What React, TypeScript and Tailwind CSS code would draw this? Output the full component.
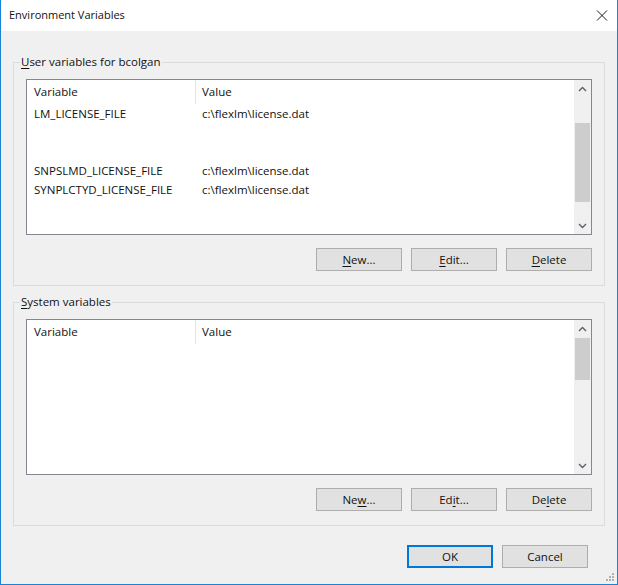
import React from "react";

type Row = { name: string; value: string };

function Chevron({ up }: { up: boolean }) {
  return (
    <svg width="9" height="6" viewBox="0 0 9 6">
      <path
        d={up ? "M1 5 L4.5 1.5 L8 5" : "M1 1 L4.5 4.5 L8 1"}
        fill="none"
        stroke="#606060"
        strokeWidth="1.4"
      />
    </svg>
  );
}

function ListView({ rows, thumbTop, thumbH }: { rows: Row[]; thumbTop: number; thumbH: number }) {
  return (
    <div className="h-[156px] border border-[#828790] bg-white flex">
      <div className="flex-1 flex flex-col">
        <div className="h-[24px] flex items-stretch shrink-0">
          <div className="w-[168px] flex items-center pl-[7px]">Variable</div>
          <div className="w-px bg-[#e5e5e5]" />
          <div className="flex items-center pl-[6px]">Value</div>
        </div>
        {rows.map((r, i) => (
          <div key={i} className="h-[19px] flex items-center">
            <div className="w-[169px] pl-[7px]">{r.name}</div>
            <div className="pl-[6px]">{r.value}</div>
          </div>
        ))}
      </div>
      <div className="w-[17px] flex flex-col bg-[#f0f0f0]">
        <div className="h-[17px] flex items-center justify-center shrink-0">
          <Chevron up />
        </div>
        <div className="flex-1 flex flex-col items-center">
          <div className="w-[15px] bg-[#cdcdcd]" style={{ marginTop: thumbTop, height: thumbH }} />
        </div>
        <div className="h-[17px] flex items-center justify-center shrink-0">
          <Chevron up={false} />
        </div>
      </div>
    </div>
  );
}

function Btn({ children, primary }: { children: React.ReactNode; primary?: boolean }) {
  return (
    <div
      className={
        primary
          ? "w-[86px] h-[23px] bg-[#e1e1e1] border-2 border-[#0078d7] flex items-center justify-center"
          : "w-[86px] h-[23px] bg-[#e1e1e1] border border-[#adadad] flex items-center justify-center"
      }
    >
      {children}
    </div>
  );
}

function Group({
  title,
  rows,
  thumbTop,
  thumbH,
  keys,
  className,
}: {
  title: React.ReactNode;
  rows: Row[];
  thumbTop: number;
  thumbH: number;
  keys: [React.ReactNode, React.ReactNode, React.ReactNode];
  className: string;
}) {
  return (
    <fieldset className={"border border-[#dcdcdc] " + className}>
      <legend className="ml-[6px] px-[1px] leading-[16px]">{title}</legend>
      <div className="px-[12px] pt-[9px] pb-[14px] flex flex-col">
        <ListView rows={rows} thumbTop={thumbTop} thumbH={thumbH} />
        <div className="mt-[13px] flex justify-end gap-[9px]">
          <Btn>{keys[0]}</Btn>
          <Btn>{keys[1]}</Btn>
          <Btn>{keys[2]}</Btn>
        </div>
      </div>
    </fieldset>
  );
}

export default function App() {
  const userRows: Row[] = [
    { name: "LM_LICENSE_FILE", value: "c:\\flexlm\\license.dat" },
    { name: "", value: "" },
    { name: "", value: "" },
    { name: "SNPSLMD_LICENSE_FILE", value: "c:\\flexlm\\license.dat" },
    { name: "SYNPLCTYD_LICENSE_FILE", value: "c:\\flexlm\\license.dat" },
  ];
  return (
    <div className="relative w-[618px] h-[585px] flex flex-col bg-[#f0f0f0] border-x border-b border-[#1883d7] text-[#111] font-['Open_Sans',sans-serif] text-[11.5px] overflow-hidden">
      <div className="h-[31px] bg-white flex items-center justify-between pl-[8px] pr-[9px] shrink-0">
        <span className="text-[11px]">Environment Variables</span>
        <svg width="12" height="11" viewBox="0 0 12 11">
          <path d="M1 0.5 L11 10.5 M11 0.5 L1 10.5" stroke="#1a1a1a" strokeWidth="1" fill="none" />
        </svg>
      </div>
      <div className="flex flex-col px-[12px]">
        <Group
          className="mt-[23px]"
          title={
            <>
              <u className="underline-offset-2">U</u>ser variables for bcolgan
            </>
          }
          rows={userRows}
          thumbTop={26}
          thumbH={79}
          keys={[
            <>
              <u className="underline-offset-2">N</u>ew...
            </>,
            <>
              <u className="underline-offset-2">E</u>dit...
            </>,
            <>
              <u className="underline-offset-2">D</u>elete
            </>,
          ]}
        />
        <Group
          className="mt-[8px]"
          title={
            <>
              <u className="underline-offset-2">S</u>ystem variables
            </>
          }
          rows={[]}
          thumbTop={1}
          thumbH={42}
          keys={[
            <>
              Ne<u className="underline-offset-2">w</u>...
            </>,
            <>
              Ed<u className="underline-offset-2">i</u>t...
            </>,
            <>
              De<u className="underline-offset-2">l</u>ete
            </>,
          ]}
        />
        <div className="mt-[19px] flex justify-end gap-[9px] pr-[17px]">
          <Btn primary>OK</Btn>
          <Btn>Cancel</Btn>
        </div>
      </div>
      <svg className="absolute right-[2px] bottom-[2px]" width="10" height="10" viewBox="0 0 10 10">
        <rect x="7" y="1" width="2" height="2" fill="#b0b0b0" />
        <rect x="4" y="4" width="2" height="2" fill="#b0b0b0" />
        <rect x="7" y="4" width="2" height="2" fill="#b0b0b0" />
        <rect x="1" y="7" width="2" height="2" fill="#b0b0b0" />
        <rect x="4" y="7" width="2" height="2" fill="#b0b0b0" />
        <rect x="7" y="7" width="2" height="2" fill="#b0b0b0" />
      </svg>
    </div>
  );
}
